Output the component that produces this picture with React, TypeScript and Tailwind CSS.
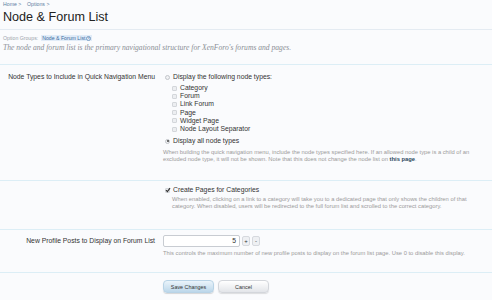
const Radio = ({ checked }: { checked?: boolean }) => (
  <span className="mr-[3px] inline-flex h-[5px] w-[5px] shrink-0 items-center justify-center rounded-full border border-[#c2c5ca] bg-[#f0f1f3]">
    {checked && <span className="h-[2px] w-[2px] rounded-full bg-[#444]" />}
  </span>
);

const Check = ({ checked }: { checked?: boolean }) => (
  <span className="relative mr-[3px] inline-flex h-[5px] w-[5px] shrink-0 items-center justify-center rounded-[1px] border border-[#d3d6da] bg-[#eceef1]">
    {checked && (
      <svg viewBox="0 0 6 6" className="absolute h-[6px] w-[6px]">
        <path d="M1 3.2 L2.4 4.6 L5 1.2" fill="none" stroke="#333" strokeWidth="1.2" />
      </svg>
    )}
  </span>
);

const nodeTypes = ["Category", "Forum", "Link Forum", "Page", "Widget Page", "Node Layout Separator"];

const Row = ({
  label,
  labelClass = "",
  children,
  className,
}: {
  label?: string;
  labelClass?: string;
  children: React.ReactNode;
  className: string;
}) => (
  <div className={`grid grid-cols-[160px_1fr] border-t border-[#dceef6] ${className}`}>
    <div className={`pr-[5px] text-right text-[6.8px] leading-[8px] text-[#333] ${labelClass}`}>{label}</div>
    <div>{children}</div>
  </div>
);

export default function App() {
  return (
    <div
      className="h-[300px] w-[492px] overflow-hidden bg-[#fafbfd]"
      style={{ fontFamily: '"Liberation Sans", Arial, sans-serif' }}
    >
      <div className="px-[3px] pt-[1px] text-[5.2px] leading-[6px] text-[#5b7da1]">Home &gt;&nbsp;&nbsp;&nbsp; Options &gt;</div>
      <h1 className="px-[3px] pt-[2px] text-[12.6px] leading-[16px] text-[#222]">Node &amp; Forum List</h1>
      <div className="mt-[4px] border-t border-[#e4ebf2] px-[3px] pt-[5px]">
        <div className="flex items-center text-[5.2px] leading-[6px] text-[#9aa3ac]">
          <span>Option Groups:</span>
          <span className="ml-[3px] flex items-center bg-[#e1ecf8] px-[1px] text-[#3a6aa0]">
            Node &amp; Forum List
            <span className="ml-[1px] inline-flex h-[5px] w-[5px] items-center justify-center rounded-full border border-[#7a9cc2] text-[3px] leading-none">▾</span>
          </span>
        </div>
        <div
          className="mt-[2px] text-[7.6px] italic leading-[9px] text-[#8a8f96]"
          style={{ fontFamily: '"Liberation Serif", Georgia, serif' }}
        >
          The node and forum list is the primary navigational structure for XenForo's forums and pages.
        </div>
      </div>

      <div className="mt-[12px]">
        <Row label="Node Types to Include in Quick Navigation Menu" className="pb-[17px] pt-[8px]">
          <div className="flex items-center pl-[5px] text-[6.8px] leading-[8px] text-[#333]">
            <Radio />
            Display the following node types:
          </div>
          <div className="mt-[3px] pl-[12px]">
            {nodeTypes.map((t) => (
              <div key={t} className="flex items-center text-[6.8px] leading-[8.2px] text-[#333]">
                <Check />
                {t}
              </div>
            ))}
          </div>
          <div className="mt-[4px] flex items-center pl-[5px] text-[6.8px] leading-[8px] text-[#333]">
            <Radio checked />
            Display all node types
          </div>
          <p className="mt-[4px] pl-[3px] pr-[14px] text-[5.8px] leading-[7px] text-[#9a9a9a]">
            When building the quick navigation menu, include the node types specified here. If an allowed node type is a child of an excluded node type, it will not be shown. Note that this does not change the node list on{" "}
            <span className="font-bold text-[#2b485c]">this page</span>.
          </p>
        </Row>

        <Row className="pb-[19px] pt-[5px]">
          <div className="flex items-center pl-[5px] text-[6.8px] leading-[8px] text-[#333]">
            <Check checked />
            Create Pages for Categories
          </div>
          <p className="mt-[2px] pl-[12px] pr-[14px] text-[5.8px] leading-[7px] text-[#9a9a9a]">
            When enabled, clicking on a link to a category will take you to a dedicated page that only shows the children of that category. When disabled, users will be redirected to the full forum list and scrolled to the correct category.
          </p>
        </Row>

        <Row label="New Profile Posts to Display on Forum List" labelClass="pt-[2px]" className="pb-[15px] pt-[5px]">
          <div className="flex items-center pl-[3px]">
            <div className="flex h-[12px] w-[77px] items-center justify-end rounded-[2px] border border-[#c8ccd2] bg-white pr-[3px] text-[6.8px] text-[#333]">
              5
            </div>
            <span className="ml-[2px] flex h-[10px] w-[8px] items-center justify-center rounded-[2px] border border-[#d6d9de] bg-[#eef0f3] text-[6px] text-[#333]">+</span>
            <span className="ml-[2px] flex h-[10px] w-[8px] items-center justify-center rounded-[2px] border border-[#d6d9de] bg-[#eef0f3] text-[6px] text-[#333]">-</span>
          </div>
          <p className="mt-[3px] pl-[3px] text-[5.8px] leading-[7px] text-[#9a9a9a]">
            This controls the maximum number of new profile posts to display on the forum list page. Use 0 to disable this display.
          </p>
        </Row>

        <Row className="pt-[7px]">
          <div className="flex gap-[4px] pl-[3px]">
            <button className="h-[13px] w-[51px] rounded-[4px] border border-[#b8d3e6] bg-gradient-to-b from-[#eaf4fb] to-[#bcd7ea] text-[5.4px] text-[#333] shadow-[0_1px_1px_rgba(0,0,0,0.15)]">
              Save Changes
            </button>
            <button className="h-[13px] w-[51px] rounded-[4px] border border-[#d3d6db] bg-gradient-to-b from-white to-[#e3e5e9] text-[5.4px] text-[#333] shadow-[0_1px_1px_rgba(0,0,0,0.12)]">
              Cancel
            </button>
          </div>
        </Row>
      </div>
    </div>
  );
}
